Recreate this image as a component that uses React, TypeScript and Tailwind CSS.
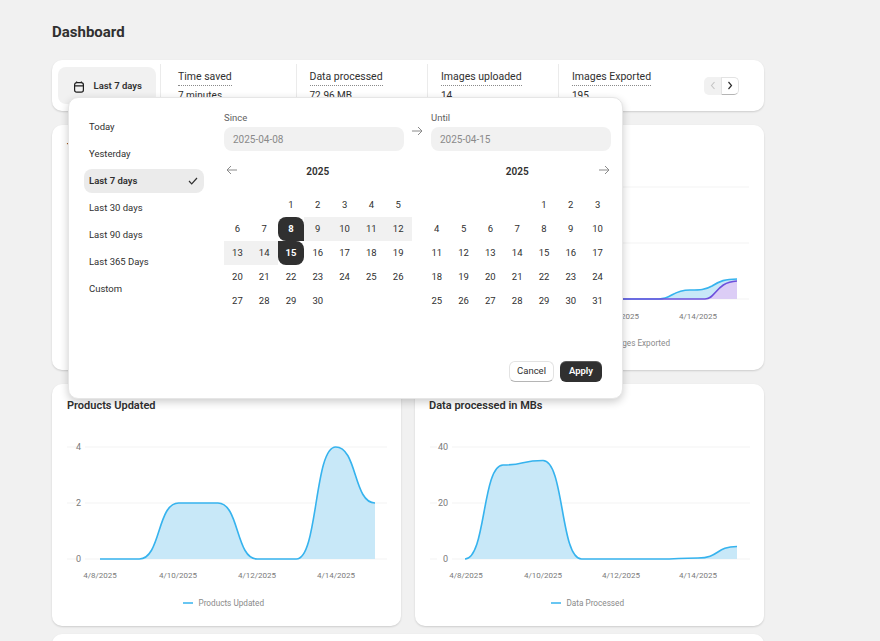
const font = { fontFamily: 'Roboto, "Noto Sans", sans-serif' };

type Pt = [number, number];

// smooth line with flat tangents at each point
function smooth(pts: Pt[], k = 0.55) {
  let d = `M${pts[0][0]} ${pts[0][1]}`;
  for (let i = 1; i < pts.length; i++) {
    const [x0, y0] = pts[i - 1];
    const [x1, y1] = pts[i];
    const dx = (x1 - x0) * k;
    d += ` C${x0 + dx} ${y0} ${x1 - dx} ${y1} ${x1} ${y1}`;
  }
  return d;
}

const presets = ['Today', 'Yesterday', 'Last 7 days', 'Last 30 days', 'Last 90 days', 'Last 365 Days', 'Custom'];

const stats = [
  { label: 'Time saved', value: '7 minutes', cls: 'w-[136px] pl-[17px]' },
  { label: 'Data processed', value: '72.96 MB', cls: 'w-[131px] pl-[12.5px]' },
  { label: 'Images uploaded', value: '14', cls: 'w-[131px] pl-[13px]' },
  { label: 'Images Exported', value: '195', cls: 'w-[146px] pl-[13px]' },
];

function Arrow({ dir = 'right', className = '' }: { dir?: 'left' | 'right'; className?: string }) {
  return (
    <svg width="12" height="10" viewBox="0 0 12 10" fill="none" stroke="#8a8a8a" strokeWidth="1" className={className}>
      {dir === 'right' ? <path d="M1 5H11M7 1L11 5L7 9" /> : <path d="M11 5H1M5 1L1 5L5 9" />}
    </svg>
  );
}

function Month({ blanks, days, range }: { blanks: number; days: number; range?: boolean }) {
  const cells = [...Array(blanks).fill(0), ...Array.from({ length: days }, (_, i) => i + 1)];
  return (
    <div className="grid grid-cols-7 w-[187.6px] auto-rows-[24px] text-[9.5px] text-[#303030]">
      {cells.map((d, i) => {
        let cls = '';
        if (range && d === 8) cls = 'bg-[#303030] text-white font-bold rounded-t-lg rounded-bl-lg';
        else if (range && d === 15) cls = 'bg-[#303030] text-white font-bold rounded-b-lg rounded-tr-lg';
        else if (range && d > 8 && d < 15) cls = 'bg-[#f1f1f1]';
        return (
          <div key={i} className={`flex items-center justify-center ${cls}`}>
            {d > 0 ? d : ''}
          </div>
        );
      })}
    </div>
  );
}

function Chart({
  x0,
  width,
  ticks,
  tickX,
  gap,
  labels,
  points,
  legend,
  legendX,
}: {
  x0: number;
  width: number;
  ticks: string[];
  tickX: number;
  gap: [number, number];
  labels: [number, string][];
  points: Pt[];
  legend: string;
  legendX: number;
}) {
  const ys = [447, 503, 559];
  const line = smooth(points);
  const last = points[points.length - 1];
  return (
    <svg width={width} height={195} viewBox={`${x0} 425 ${width} 195`} className="block" style={font}>
      {ys.map((y, i) => (
        <g key={y}>
          <path d={`M${x0 + 15} ${y}H${x0 + width - 14}`} stroke="#f3f3f3" strokeWidth="1" />
          <rect x={gap[0]} y={y - 7} width={gap[1] - gap[0]} height="14" fill="#fff" />
          <text x={tickX} y={y + 2.5} fontSize="9" fill="#7a7a7a" textAnchor="end">
            {ticks[i]}
          </text>
        </g>
      ))}
      <path d={`${line} L${last[0]} 559 L${points[0][0]} 559Z`} fill="#c8e8f8" />
      <path d={line} fill="none" stroke="#36b3ee" strokeWidth="1.6" />
      {labels.map(([x, t]) => (
        <text key={t} x={x} y={578} fontSize="8" fill="#7a7a7a" textAnchor="middle">
          {t}
        </text>
      ))}
      <path d={`M${legendX} 603h10`} stroke="#36b3ee" strokeWidth="1.5" />
      <text x={legendX + 15.5} y={606} fontSize="8.2" fill="#8a8a8a">
        {legend}
      </text>
    </svg>
  );
}

export default function App() {
  return (
    <div className="relative h-[641px] overflow-hidden bg-[#f1f1f1] pl-[52px] pr-[116px] text-[#303030]" style={font}>
      <h1 className="h-[60px] pt-[21px] text-[15px] leading-[22px] font-bold">Dashboard</h1>

      {/* stats strip */}
      <div className="h-[51px] rounded-[10px] bg-white shadow-[0_1px_2px_rgba(0,0,0,0.15)] flex items-center overflow-hidden">
        <div className="w-[108px] h-full flex items-center pl-[6px] pr-[4px]">
          <div className="w-[98px] h-[37px] pt-[2px] rounded-lg bg-[#f1f1f1] flex items-center pl-[16px] gap-[9.5px]">
            <svg width="10" height="12" viewBox="0 0 10 12" fill="none" stroke="#1f1f1f" strokeWidth="1.2">
              <rect x="0.6" y="1.6" width="8.8" height="9.6" rx="2.2" />
              <path d="M0.6 4.8H9.4M2.6 0.4V1.6M7.4 0.4V1.6" />
            </svg>
            <span className="text-[9.5px] font-semibold">Last 7 days</span>
          </div>
        </div>
        {stats.map((s) => (
          <div key={s.label} className={`${s.cls} h-[44px] border-l border-[#ebebeb] pt-[5px]`}>
            <div className="w-fit text-[10.5px] leading-[16px] border-b border-dotted border-[#8a8a8a] text-[#303030]">
              {s.label}
            </div>
            <div className="text-[10px] leading-[16px] mt-[2px]">{s.value}</div>
          </div>
        ))}
        <div className="flex h-[18px] rounded-[5px]">
          <div className="w-[17px] flex items-center justify-center rounded-l-[5px] bg-[#f1f1f1]">
            <svg width="6" height="9" viewBox="0 0 6 9" fill="none" stroke="#c4c4c4" strokeWidth="1.1">
              <path d="M4.5 1L1.5 4.5L4.5 8" />
            </svg>
          </div>
          <div className="w-[18px] flex items-center justify-center rounded-r-[5px] bg-white border border-[#e3e3e3] border-b-[#b5b5b5]">
            <svg width="6" height="9" viewBox="0 0 6 9" fill="none" stroke="#303030" strokeWidth="1.2">
              <path d="M1.5 1L4.5 4.5L1.5 8" />
            </svg>
          </div>
        </div>
      </div>

      {/* images chart */}
      <div className="mt-[14px] h-[245px] rounded-[10px] bg-white shadow-[0_1px_2px_rgba(0,0,0,0.15)] overflow-hidden">
        <div className="pl-[15px] pt-[14px] h-[40px] text-[11px] leading-[18px] font-semibold">Total images</div>
        <svg width="712" height="190" viewBox="52 165 712 190" className="block" style={font}>
          <path d="M85 187H749M85 243H749M85 299H749" stroke="#f3f3f3" />
          <path d="M100 299H659C672 299 672 290 690 290C700 290 705 290 712 286C720 281 725 279 737 279V299Z" fill="#c8e8f8" />
          <path d="M100 299H705C716 299 716 282 737 281V299Z" fill="#dccdf6" />
          <path d="M100 299H659C672 299 672 290 690 290C700 290 705 290 712 286C720 281 725 279 737 279" fill="none" stroke="#36b3ee" strokeWidth="1.6" />
          <path d="M100 299H705C716 299 716 282 737 281" fill="none" stroke="#6d4fdc" strokeWidth="1.6" />
          <text x="620" y="319" fontSize="8" fill="#7a7a7a" textAnchor="middle">4/12/2025</text>
          <text x="698" y="319" fontSize="8" fill="#7a7a7a" textAnchor="middle">4/14/2025</text>
          <text x="670" y="346" fontSize="8.2" fill="#8a8a8a" textAnchor="end">Images Exported</text>
        </svg>
      </div>

      {/* lower charts */}
      <div className="mt-[14px] grid grid-cols-2 gap-[14px]">
        <div className="h-[242px] rounded-[10px] bg-white shadow-[0_1px_2px_rgba(0,0,0,0.15)] overflow-hidden">
          <div className="pl-[15px] pt-[13px] h-[41px] text-[11px] leading-[18px] font-semibold">Products Updated</div>
          <Chart
            x0={52}
            width={349}
            ticks={['4', '2', '0']}
            tickX={81}
            gap={[77, 85]}
            labels={[[100, '4/8/2025'], [178, '4/10/2025'], [257, '4/12/2025'], [336, '4/14/2025']]}
            points={[[100, 559], [139.3, 559], [178.6, 503], [217.9, 503], [257.1, 559], [296.4, 559], [335.7, 447], [375, 503]]}
            legend="Products Updated"
            legendX={183}
          />
        </div>
        <div className="h-[242px] rounded-[10px] bg-white shadow-[0_1px_2px_rgba(0,0,0,0.15)] overflow-hidden">
          <div className="pl-[14px] pt-[13px] h-[41px] text-[11px] leading-[18px] font-semibold">Data processed in MBs</div>
          <Chart
            x0={415}
            width={349}
            ticks={['40', '20', '0']}
            tickX={448}
            gap={[437, 452]}
            labels={[[466, '4/8/2025'], [543, '4/10/2025'], [621, '4/12/2025'], [698, '4/14/2025']]}
            points={[[465, 559], [503, 465], [543, 460.5], [581.5, 559], [620, 559], [659, 559], [698, 558], [737, 546.5]]}
            legend="Data Processed"
            legendX={551}
          />
        </div>
      </div>

      <div className="mt-[8px] h-[40px] rounded-[10px] bg-white shadow-[0_1px_2px_rgba(0,0,0,0.15)]" />

      {/* date picker popover */}
      <div className="absolute left-[68px] top-[97px] w-[555px] h-[302px] rounded-[10px] bg-white border border-[#e6e6e6] shadow-[0_3px_8px_rgba(0,0,0,0.2)] flex pl-[15px] pr-[10px] pt-[17px]">
        <div className="w-[120px] mr-[20px] flex flex-col gap-[3px] text-[9.5px]">
          {presets.map((p) => (
            <div
              key={p}
              className={`h-[24px] rounded-lg px-[5px] flex items-center justify-between ${
                p === 'Last 7 days' ? 'bg-[#ebebeb] font-semibold' : ''
              }`}
            >
              {p}
              {p === 'Last 7 days' && (
                <svg width="10" height="8" viewBox="0 0 10 8" fill="none" stroke="#303030" strokeWidth="1.2" className="mr-[1px]">
                  <path d="M1 4L3.7 6.8L9 1" />
                </svg>
              )}
            </div>
          ))}
        </div>

        <div className="w-[387px] -mt-[4px]">
          <div className="flex items-end">
            <div className="w-[180px]">
              <div className="text-[9.5px] leading-[14px] text-[#616161] mb-[2px]">Since</div>
              <div className="h-[24px] pt-[1px] rounded-lg bg-[#f1f1f1] pl-[9px] flex items-center text-[10px] text-[#8a8a8a]">2025-04-08</div>
            </div>
            <div className="w-[27px] h-[24px] pb-[16px] pr-[2px] flex items-center justify-center">
              <Arrow />
            </div>
            <div className="w-[180px]">
              <div className="text-[9.5px] leading-[14px] text-[#616161] mb-[2px]">Until</div>
              <div className="h-[24px] pt-[1px] rounded-lg bg-[#f1f1f1] pl-[9px] flex items-center text-[10px] text-[#8a8a8a]">2025-04-15</div>
            </div>
          </div>

          <div className="flex gap-[11.8px] mt-[9px]">
            <div className="relative">
              <div className="h-[33px] flex items-center justify-center text-[10px] font-semibold pb-[11px]">2025</div>
              <Arrow dir="left" className="absolute left-[2px] top-[5px]" />
              <Month blanks={2} days={30} range />
            </div>
            <div className="relative">
              <div className="h-[33px] flex items-center justify-center text-[10px] font-semibold pb-[11px]">2025</div>
              <Arrow className="absolute right-[1px] top-[5px]" />
              <Month blanks={4} days={31} />
            </div>
          </div>
        </div>

        <div className="absolute right-[20px] bottom-[16px] flex gap-[6px] text-[9.5px]">
          <div className="w-[45px] h-[21px] rounded-[6px] bg-white border border-[#e3e3e3] border-b-[#b5b5b5] flex items-center justify-center">Cancel</div>
          <div className="w-[42px] h-[21px] rounded-[6px] bg-[#303030] text-white font-semibold flex items-center justify-center shadow-[inset_0_1px_0_rgba(255,255,255,0.2)]">Apply</div>
        </div>
      </div>
    </div>
  );
}
